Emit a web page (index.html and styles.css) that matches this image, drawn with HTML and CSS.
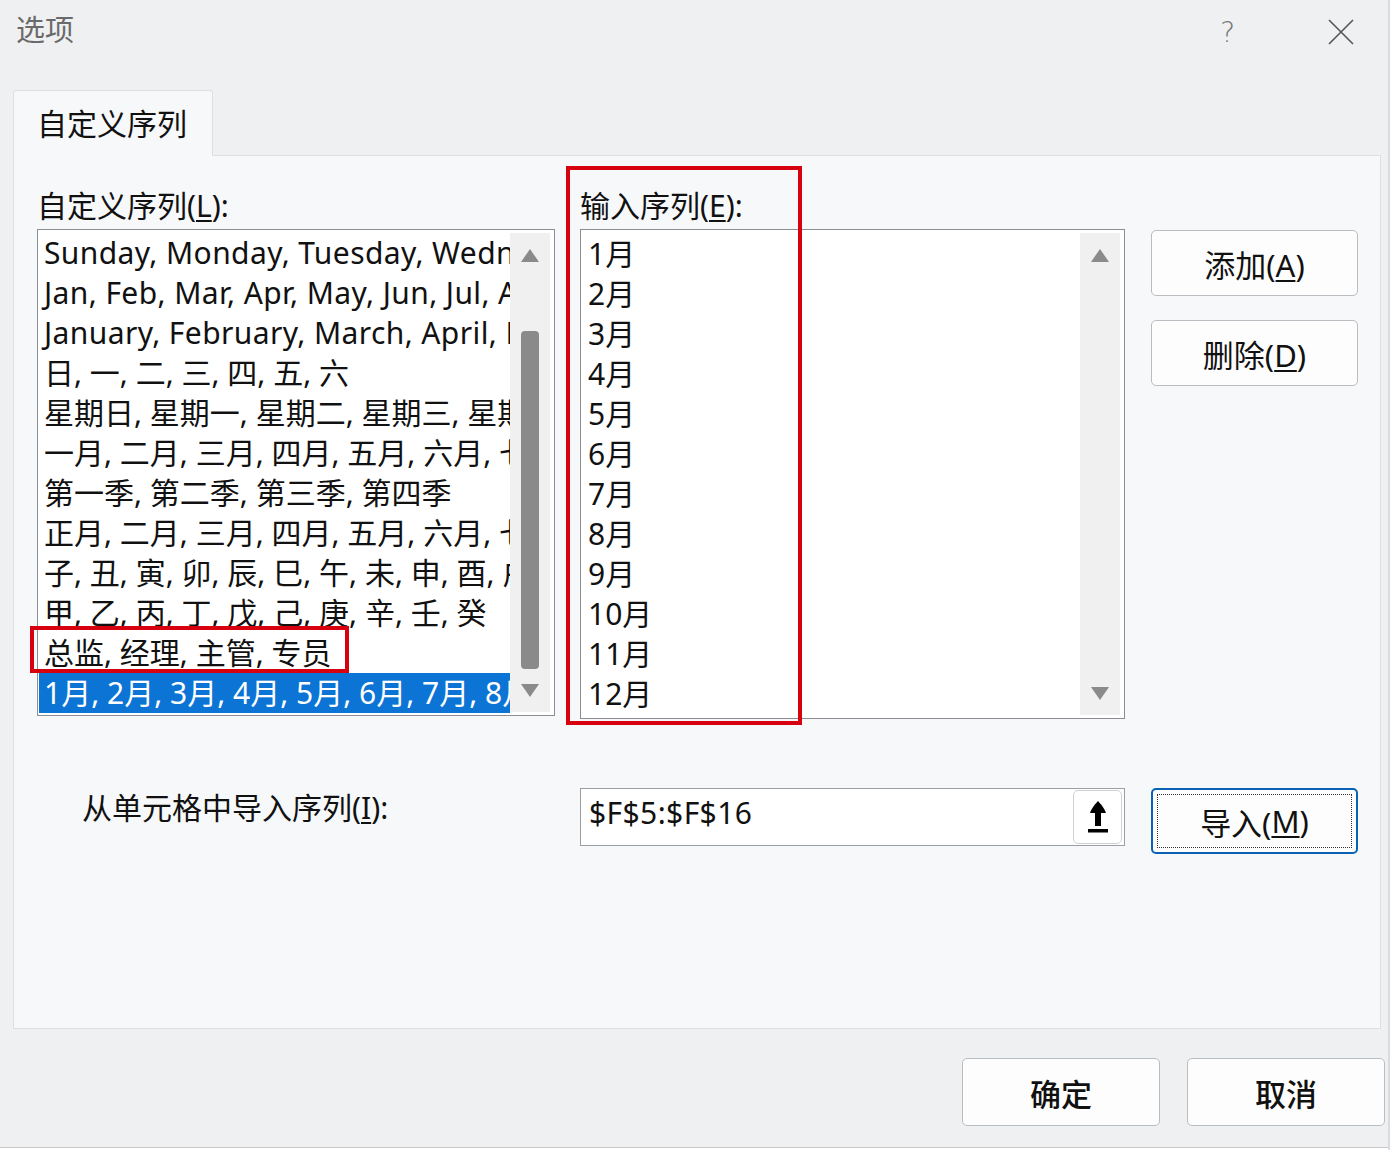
FILE: index.html
```html
<!DOCTYPE html>
<html lang="zh-CN">
<head>
<meta charset="utf-8">
<title>选项</title>
<link rel="stylesheet" href="styles.css">
</head>
<body>
<div class="dialog">
  <div class="titlebar">
    <div class="title">选项</div>
    <div class="title-actions">
      <span class="help">?</span>
      <svg class="close" width="28" height="28" viewBox="0 0 28 28"><path d="M2 2 L26 26 M26 2 L2 26" stroke="#555" stroke-width="1.6" fill="none"/></svg>
    </div>
  </div>
  <div class="tabs">
    <div class="tab">自定义序列</div>
  </div>
  <div class="panel">
    <div class="grid">
      <div class="label">自定义序列(<u>L</u>):</div>
      <div class="label">输入序列(<u>E</u>):</div>
      <div></div>

      <div class="listbox left-list">
        <div class="rows">
          <div class="row latin">Sunday, Monday, Tuesday, Wednesday, Thursday, Friday, Saturday</div>
          <div class="row latin">Jan, Feb, Mar, Apr, May, Jun, Jul, Aug, Sep, Oct, Nov, Dec</div>
          <div class="row latin">January, February, March, April, May, June, July</div>
          <div class="row">日, 一, 二, 三, 四, 五, 六</div>
          <div class="row">星期日, 星期一, 星期二, 星期三, 星期四, 星期五, 星期六</div>
          <div class="row">一月, 二月, 三月, 四月, 五月, 六月, 七月, 八月</div>
          <div class="row">第一季, 第二季, 第三季, 第四季</div>
          <div class="row">正月, 二月, 三月, 四月, 五月, 六月, 七月, 八月</div>
          <div class="row">子, 丑, 寅, 卯, 辰, 巳, 午, 未, 申, 酉, 戌, 亥</div>
          <div class="row">甲, 乙, 丙, 丁, 戊, 己, 庚, 辛, 壬, 癸</div>
          <div class="row">总监, 经理, 主管, 专员</div>
          <div class="row selected">1月, 2月, 3月, 4月, 5月, 6月, 7月, 8月, 9月, 10月, 11月, 12月</div>
        </div>
        <div class="scrollbar">
          <span class="arrow up"></span>
          <span class="thumb"></span>
          <span class="arrow down"></span>
        </div>
      </div>

      <div class="listbox right-list">
        <div class="rows entries">
          <div class="row">1月</div>
          <div class="row">2月</div>
          <div class="row">3月</div>
          <div class="row">4月</div>
          <div class="row">5月</div>
          <div class="row">6月</div>
          <div class="row">7月</div>
          <div class="row">8月</div>
          <div class="row">9月</div>
          <div class="row">10月</div>
          <div class="row">11月</div>
          <div class="row">12月</div>
        </div>
        <div class="scrollbar empty">
          <span class="arrow up"></span>
          <span class="arrow down"></span>
        </div>
      </div>

      <div class="side-buttons">
        <button class="btn">添加(<u>A</u>)</button>
        <button class="btn">删除(<u>D</u>)</button>
      </div>

      <div class="label import-label">从单元格中导入序列(<u>I</u>):</div>
      <div class="ref-input">
        <span class="ref-text">$F$5:$F$16</span>
        <span class="ref-btn">
          <svg width="22" height="34" viewBox="0 0 22 34"><path d="M11 1 C9 3 4 9 3 13 L8 13 L8 26 L14 26 L14 13 L19 13 C18 9 13 3 11 1 Z" fill="#000"/><rect x="1" y="29" width="20" height="3.5" fill="#000"/></svg>
        </span>
      </div>
      <button class="btn focused"><span class="focus-ring">导入(<u>M</u>)</span></button>
    </div>

    <div class="highlight hl-left"></div>
    <div class="highlight hl-right"></div>
  </div>

  <div class="footer">
    <button class="btn footer-btn">确定</button>
    <button class="btn footer-btn">取消</button>
  </div>
  <div class="bottom-edge"></div>
</div>
</body>
</html>
```

FILE: styles.css
```css
* { box-sizing: border-box; }

html, body {
  margin: 0;
  padding: 0;
  width: 1390px;
  height: 1150px;
  overflow: hidden;
  background: #eff0f2;
}

body {
  font-family: "Noto Sans", "Noto Sans CJK SC", sans-serif;
  color: #111;
}

u { text-underline-offset: 3px; text-decoration-thickness: 1.5px; }

.dialog {
  width: 1390px;
  height: 1150px;
  background: #eff0f2;
  display: flex;
  flex-direction: column;
  border-right: 2px solid #d9dbde;
}

.titlebar {
  height: 90px;
  display: flex;
  justify-content: space-between;
  align-items: flex-start;
  padding: 10px 33px 0 16px;
}

.title {
  font-size: 29px;
  line-height: 40px;
  color: #6a6a6a;
}

.title-actions {
  display: flex;
  align-items: center;
  gap: 92px;
  height: 44px;
}

.help {
  font-size: 28px;
  color: #777;
  font-family: "DejaVu Sans", sans-serif;
  font-weight: 200;
}

.tabs {
  display: flex;
  padding-left: 13px;
  height: 65px;
}

.tab {
  width: 200px;
  height: 66px;
  background: #f7f8fa;
  border: 1px solid #dcdfe3;
  border-bottom: none;
  border-radius: 3px 3px 0 0;
  font-size: 30px;
  line-height: 66px;
  padding-left: 23px;
  position: relative;
  z-index: 1;
}

.panel {
  margin-left: 13px;
  width: 1368px;
  height: 874px;
  background: #f7f8fa;
  border: 1px solid #dcdfe3;
  position: relative;
  padding: 30px 0 0 23px;
}

.grid {
  display: grid;
  grid-template-columns: 518px 545px 207px;
  grid-template-rows: 43px 490px auto;
  column-gap: 25px;
  align-items: start;
}
.side-buttons, .grid > .btn { margin-left: 1px; }

.label {
  font-size: 30px;
  line-height: 40px;
  white-space: nowrap;
}

.listbox {
  background: #fff;
  border: 1px solid #8a8d91;
  display: flex;
  overflow: hidden;
}

.left-list { height: 487px; }
.right-list { height: 490px; }

.rows {
  flex: 1;
  min-width: 0;
  padding: 3px 0 0 1px;
  overflow: hidden;
}

.row {
  height: 40px;
  line-height: 40px;
  font-size: 30px;
  white-space: nowrap;
  overflow: hidden;
  padding-left: 5px;
}

.row.latin { letter-spacing: 0.4px; }

.row.selected {
  background: #0b74d4;
  color: #fff;
}

.entries { padding-left: 2px; padding-top: 4px; }

.scrollbar {
  width: 40px;
  background: #f0f0f0;
  margin: 3px 4px 3px 0;
  display: flex;
  flex-direction: column;
  align-items: center;
  position: relative;
}

.arrow {
  width: 0;
  height: 0;
  border-left: 9px solid transparent;
  border-right: 9px solid transparent;
}
.arrow.up {
  border-bottom: 13px solid #8a8a8a;
  margin-top: 16px;
}
.arrow.down {
  border-top: 13px solid #8a8a8a;
  margin-top: auto;
  margin-bottom: 15px;
}

.thumb {
  width: 18px;
  height: 338px;
  background: #8a8a8a;
  border-radius: 4px;
  margin-top: 69px;
}

.side-buttons {
  display: flex;
  flex-direction: column;
  gap: 24px;
  padding-top: 1px;
}

.btn {
  width: 207px;
  height: 66px;
  border: 1px solid #b9bcc0;
  border-radius: 5px;
  background: #fdfdfd;
  font-family: "Noto Sans", "Noto Sans CJK SC", sans-serif;
  font-size: 31px;
  color: #111;
  padding: 0;
}

.import-label {
  margin-top: 69px;
  padding-left: 45px;
}

.ref-input {
  margin-top: 69px;
  height: 58px;
  background: #fff;
  border: 1px solid #9b9ea2;
  display: flex;
  align-items: center;
  justify-content: space-between;
  padding: 1px 2px 1px 8px;
}

.ref-text {
  font-size: 30px;
  letter-spacing: 0.4px;
  line-height: 40px;
  margin-top: -8px;
}

.ref-btn {
  width: 49px;
  height: 54px;
  border: 1px solid #cfd1d4;
  border-radius: 5px;
  background: #fff;
  display: flex;
  align-items: center;
  justify-content: center;
}

.btn.focused {
  margin-top: 69px;
  border: 2px solid #0a62b5;
  padding: 4px;
}

.focus-ring {
  display: flex;
  align-items: center;
  justify-content: center;
  height: 100%;
  border: 1px dotted #333;
}

.highlight {
  position: absolute;
  border: 4px solid #d7000f;
}
.hl-left {
  left: 16px;
  top: 470px;
  width: 319px;
  height: 47px;
}
.hl-right {
  left: 552px;
  top: 10px;
  width: 236px;
  height: 559px;
}

.footer {
  display: flex;
  justify-content: flex-end;
  gap: 27px;
  padding: 29px 3px 0 0;
  height: 118px;
}

.footer-btn {
  width: 198px;
  height: 68px;
  font-weight: 500;
}

.bottom-edge {
  height: 3px;
  background: #fff;
  border-top: 1px solid #c8c8c8;
}
```
